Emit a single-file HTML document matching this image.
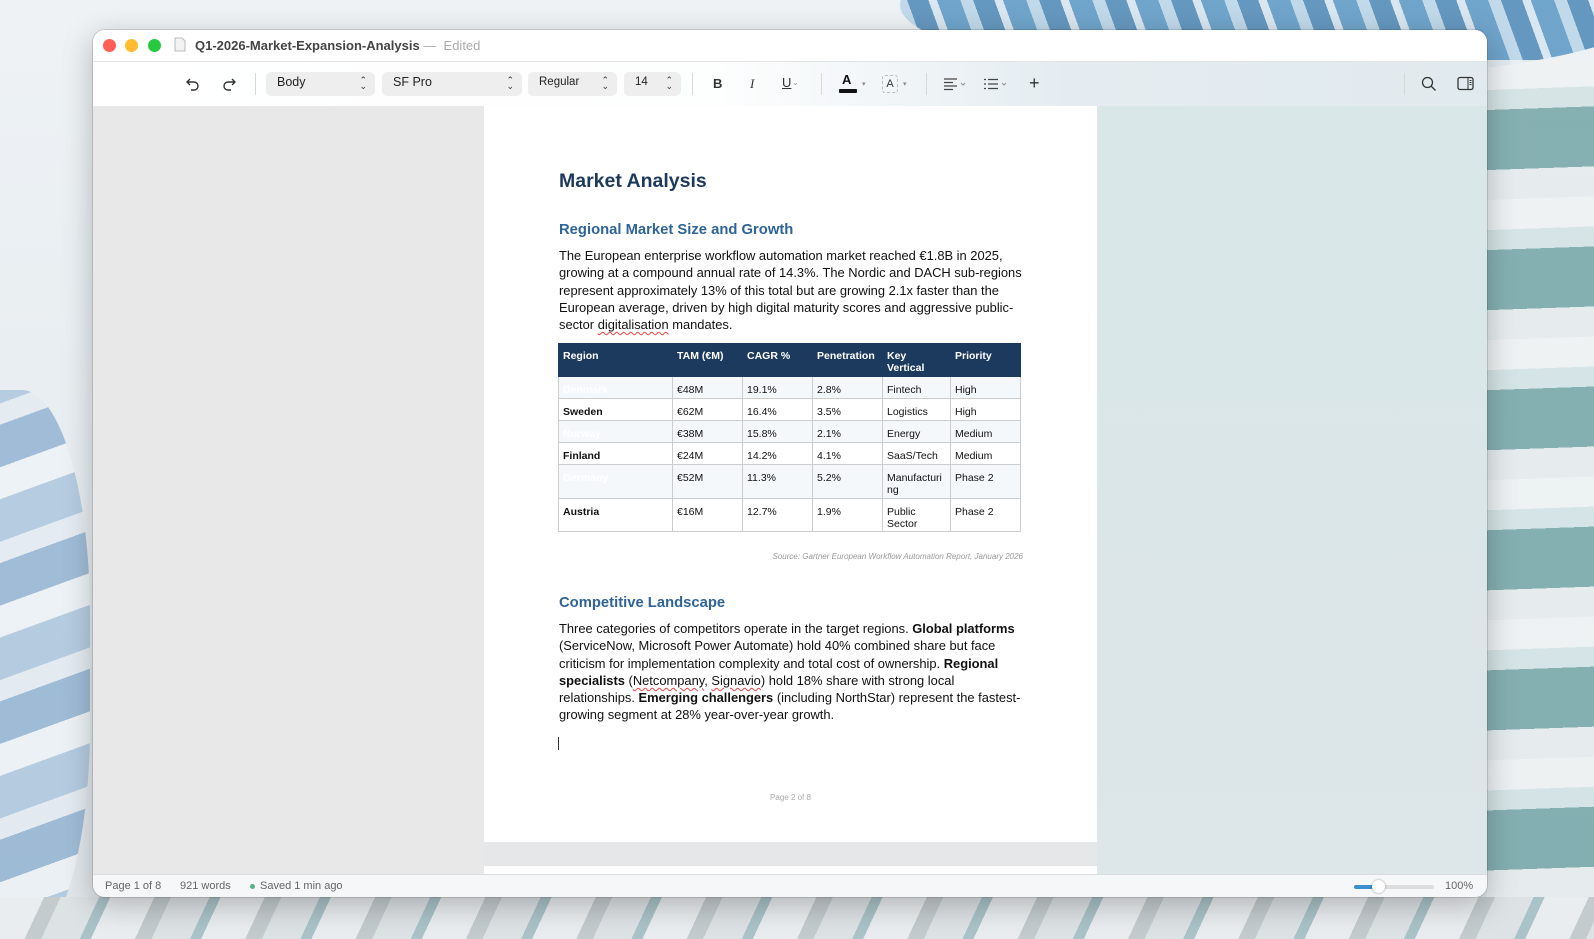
<!DOCTYPE html>
<html><head><meta charset="utf-8"><style>
*{margin:0;padding:0;box-sizing:border-box}
body{width:1594px;height:939px;overflow:hidden;position:relative;font-family:"Liberation Sans",sans-serif;background:linear-gradient(180deg,#eef2f5 0%,#e6ecf0 60%,#dfe5e9 100%)}
.bg{position:absolute;overflow:hidden;inset:0}
.s{position:absolute}
.win{position:absolute;left:93px;top:30px;width:1394px;height:867px;border-radius:12px;overflow:hidden;box-shadow:0 8px 30px rgba(0,0,0,.25),0 0 0 1px rgba(0,0,0,.12);background:#e8e8e8}
.title{position:absolute;left:0;top:0;width:100%;height:31px;background:#fff}
.tl{position:absolute;top:9px;width:13px;height:13px;border-radius:50%}
.tb{position:absolute;left:0;top:31px;width:100%;height:45px;background:linear-gradient(90deg,#fff 0%,#fdfefe 45%,#e4ecf1 70%,#e1eaee 100%);border-top:1px solid #e4e4e4}
.pill{position:absolute;top:10px;height:24px;background:#eeeeef;border-radius:5px;font-size:12.5px;color:#222;padding:3px 0 0 11px}
.pill .ar{position:absolute;right:8px;top:5px;font-size:9px;line-height:6px;color:#333;text-align:center}
.sep{position:absolute;top:11px;width:1px;height:22px;background:#d8d8d8}
.ic{position:absolute;top:12px}
.left{position:absolute;left:0;top:76px;width:391px;height:768px;background:#e8e8e8}
.right{position:absolute;left:1004px;top:76px;width:390px;height:768px;background:linear-gradient(180deg,#d9e7e8,#dde6e8)}
.mid{position:absolute;left:391px;top:76px;width:613px;height:768px;background:#e6e7e9}
.page{position:absolute;left:391px;top:76px;width:613px;height:736px;background:#fff}
.page2{position:absolute;left:391px;top:836px;width:613px;height:10px;background:#fff}
.status{position:absolute;left:0;top:844px;width:100%;height:23px;background:#f6f7f8;border-top:1px solid #dcdcdc;font-size:11px;color:#666}
.doc{position:absolute;left:466px;color:#111}
p.b{font-size:12.9px;line-height:17.3px;width:470px}
table{border-collapse:collapse;font-size:10.5px;color:#222;table-layout:fixed}
td,th{border:1px solid #ccc;padding:7px 4px 0 4px;vertical-align:top;text-align:left;line-height:12px;word-break:break-all}
th{background:#1c3a5e;color:#fff;font-weight:bold;border-color:#1c3a5e;border-right:1px dotted #000;padding-top:6px;word-break:normal}
.u{text-decoration:underline wavy #e44;text-decoration-thickness:1px;text-underline-offset:2px}
</style></head><body>
<div class="bg">
 <div class="s" style="left:900px;top:-70px;width:760px;height:150px;border-radius:50%;background:repeating-linear-gradient(70deg,#5a97c4 0 22px,#b9d5e8 22px 34px,#4d88b6 34px 54px,#d6e5f0 54px 62px);opacity:.85"></div>
 <div class="s" style="left:1487px;top:60px;width:120px;height:880px;background:repeating-linear-gradient(178deg,#eef2f3 0 30px,#d3e3e5 30px 50px,#7aa9ab 50px 110px,#e6eced 110px 140px);opacity:.9"></div>
 <div class="s" style="left:-80px;top:390px;width:170px;height:560px;border-radius:40%;background:repeating-linear-gradient(160deg,#a9c4dd 0 40px,#e3ebf2 40px 60px,#8eb0d0 60px 100px,#eef3f7 100px 130px);opacity:.8"></div>
 <div class="s" style="left:0;top:897px;width:1594px;height:42px;background:repeating-linear-gradient(115deg,#e9edef 0 40px,#c3cbcf 40px 55px,#dde2e5 55px 90px,#a9c3c8 90px 100px)"></div>
</div>
<div class="win">
 <div class="title">
  <div class="tl" style="left:10px;background:#fe5f57"></div>
  <div class="tl" style="left:32px;background:#febc2e"></div>
  <div class="tl" style="left:55px;background:#28c840"></div>
  <svg class="s" style="left:81px;top:7px" width="12" height="15"><path d="M1 1h7l3 3v10H1z" fill="#f3f3f3" stroke="#bbb"/></svg>
  <div class="s" style="left:102px;top:8px;font-size:13px;font-weight:bold;color:#444">Q1-2026-Market-Expansion-Analysis <span style="font-weight:normal;color:#aaa">— &nbsp;Edited</span></div>
 </div>
 <div class="tb">
  <svg class="ic" style="left:92px;top:14px" width="16" height="16" fill="none" stroke="#333" stroke-width="1.4"><path d="M5 3L2 6l3 3M2 6h7a4 4 0 010 8H6"/></svg>
  <svg class="ic" style="left:128px;top:14px" width="16" height="16" fill="none" stroke="#333" stroke-width="1.4"><path d="M11 3l3 3-3 3M14 6H7a4 4 0 000 8h3"/></svg>
  <div class="sep" style="left:162px"></div>
  <div class="pill" style="left:173px;width:109px">Body<div class="ar">⌃<br>⌄</div></div>
  <div class="pill" style="left:289px;width:140px">SF Pro<div class="ar">⌃<br>⌄</div></div>
  <div class="pill" style="left:435px;width:89px;font-size:11.5px;padding-top:4px">Regular<div class="ar">⌃<br>⌄</div></div>
  <div class="pill" style="left:531px;width:57px;font-size:11.5px;padding-top:4px">14<div class="ar">⌃<br>⌄</div></div>
  <div class="sep" style="left:599px"></div>
  <div class="s" style="left:620px;top:14px;font-weight:bold;font-size:13px;color:#333">B</div>
  <div class="s" style="left:657px;top:14px;font-style:italic;font-size:13px;font-family:'Liberation Serif',serif;color:#333">I</div>
  <div class="s" style="left:689px;top:13px;font-size:13px;color:#333;text-decoration:underline">U</div><div class="s" style="left:699px;top:16px;font-size:8px;color:#999">⌄</div>
  <div class="sep" style="left:728px"></div>
  <div class="s" style="left:749px;top:10px;font-weight:bold;font-size:13px;color:#111">A</div>
  <div class="s" style="left:746px;top:27px;width:18px;height:4px;background:#111;border-radius:1px"></div>
  <div class="s" style="left:769px;top:18px;font-size:7px;color:#888">▾</div>
  <div class="s" style="left:789px;top:13px;width:16px;height:18px;border:1px dashed #bbb;border-radius:3px;font-size:11px;text-align:center;padding-top:2px;color:#333">A</div>
  <div class="s" style="left:810px;top:18px;font-size:7px;color:#888">▾</div>
  <div class="sep" style="left:833px"></div>
  <svg class="ic" style="left:851px;top:15px" width="24" height="14" fill="none" stroke="#444" stroke-width="1.2"><path d="M0 2h13M0 5.5h9M0 9h13M0 12.5h9"/><path d="M17 6l2 2 2-2" stroke="#999"/></svg>
  <svg class="ic" style="left:891px;top:15px" width="26" height="14" fill="none" stroke="#444" stroke-width="1.2"><path d="M0 2.5h2M0 7h2M0 11.5h2M4 2.5h10M4 7h10M4 11.5h10"/><path d="M18 6l2 2 2-2" stroke="#999"/></svg>
  <div class="s" style="left:936px;top:11px;font-size:18px;color:#333">+</div>
  <div class="sep" style="left:1311px"></div>
  <svg class="ic" style="left:1328px;top:14px" width="16" height="16" fill="none" stroke="#333" stroke-width="1.3"><circle cx="6.5" cy="6.5" r="5"/><path d="M10 10l4.5 4.5"/></svg>
  <svg class="ic" style="left:1364px;top:14px" width="18" height="16" fill="none" stroke="#333" stroke-width="1.3"><rect x="1" y="1.5" width="15" height="12" rx="2"/><path d="M11 1.5v12M12.5 4.5h2M12.5 6.5h2M12.5 8.5h2" stroke-width="1"/></svg>
 </div>
 <div class="left"></div><div class="mid"></div><div class="right"></div>
 <div class="page"></div>
 <div class="page2"></div>
 <div class="doc" style="top:140px;font-size:19.5px;font-weight:bold;color:#1d3a5c">Market Analysis</div>
 <div class="doc" style="top:192px;font-size:14.8px;font-weight:bold;color:#2f6497">Regional Market Size and Growth</div>
 <p class="doc b" style="top:217px">The European enterprise workflow automation market reached €1.8B in 2025, growing at a compound annual rate of 14.3%. The Nordic and DACH sub-regions represent approximately 13% of this total but are growing 2.1x faster than the European average, driven by high digital maturity scores and aggressive public-sector <span class="u">digitalisation</span> mandates.</p>
 <table class="doc" style="top:313px;left:465px;width:463px">
  <colgroup><col style="width:114px"><col style="width:70px"><col style="width:70px"><col style="width:70px"><col style="width:68px"><col></colgroup>
  <tr style="height:33px"><th>Region</th><th>TAM (€M)</th><th>CAGR %</th><th>Penetration</th><th>Key<br>Vertical</th><th style="border-right:1px solid #1c3a5e">Priority</th></tr>
  <tr style="height:22px;background:#f4f8fb"><td style="font-weight:bold;color:#fff">Denmark</td><td>€48M</td><td>19.1%</td><td>2.8%</td><td>Fintech</td><td>High</td></tr>
  <tr style="height:22px"><td style="font-weight:bold">Sweden</td><td>€62M</td><td>16.4%</td><td>3.5%</td><td>Logistics</td><td>High</td></tr>
  <tr style="height:22px;background:#f4f8fb"><td style="font-weight:bold;color:#fff">Norway</td><td>€38M</td><td>15.8%</td><td>2.1%</td><td>Energy</td><td>Medium</td></tr>
  <tr style="height:22px"><td style="font-weight:bold">Finland</td><td>€24M</td><td>14.2%</td><td>4.1%</td><td>SaaS/Tech</td><td>Medium</td></tr>
  <tr style="height:34px;background:#f4f8fb"><td style="font-weight:bold;color:#fff">Germany</td><td>€52M</td><td>11.3%</td><td>5.2%</td><td>Manufacturi<br>ng</td><td>Phase 2</td></tr>
  <tr style="height:33px"><td style="font-weight:bold">Austria</td><td>€16M</td><td>12.7%</td><td>1.9%</td><td>Public<br>Sector</td><td>Phase 2</td></tr>
 </table>
 <div class="doc" style="top:522px;left:560px;width:370px;text-align:right;font-size:8px;font-style:italic;color:#999">Source: Gartner European Workflow Automation Report, January 2026</div>
 <div class="doc" style="top:565px;font-size:14.8px;font-weight:bold;color:#2f6497">Competitive Landscape</div>
 <p class="doc b" style="top:590px">Three categories of competitors operate in the target regions. <b>Global platforms</b> (ServiceNow, Microsoft Power Automate) hold 40% combined share but face criticism for implementation complexity and total cost of ownership. <b>Regional specialists</b> (<span class="u">Netcompany</span>, <span class="u">Signavio</span>) hold 18% share with strong local relationships. <b>Emerging challengers</b> (including NorthStar) represent the fastest-growing segment at 28% year-over-year growth.</p>
 <div class="s" style="left:465px;top:707px;width:1px;height:13px;background:#333"></div>
 <div class="s" style="left:391px;top:763px;width:613px;text-align:center;font-size:8px;color:#aaa">Page 2 of 8</div>
 <div class="status">
  <span class="s" style="left:12px;top:5px">Page 1 of 8</span>
  <span class="s" style="left:87px;top:5px">921 words</span>
  <span class="s" style="left:157px;top:9px;width:5px;height:5px;border-radius:50%;background:#5bb08a"></span>
  <span class="s" style="left:167px;top:5px">Saved 1 min ago</span>
  <span class="s" style="left:1261px;top:10px;width:80px;height:4px;border-radius:2px;background:#ddd"></span>
  <span class="s" style="left:1261px;top:10px;width:22px;height:4px;border-radius:2px;background:#3c8fd0"></span>
  <span class="s" style="left:1279px;top:5px;width:13px;height:13px;border-radius:50%;background:#fff;box-shadow:0 0 2px rgba(0,0,0,.4)"></span>
  <span class="s" style="left:1352px;top:5px">100%</span>
 </div>
</div>
</body></html>
